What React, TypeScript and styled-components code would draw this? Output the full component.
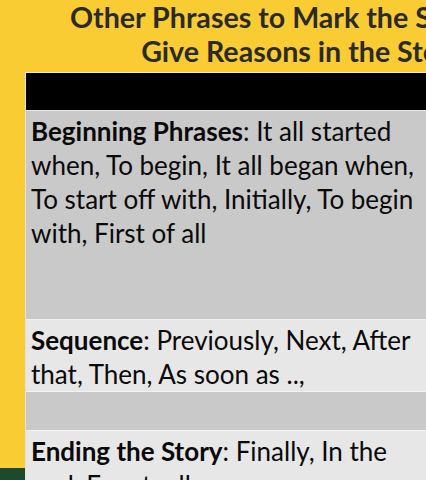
import React from "react"
import styled, { createGlobalStyle } from "styled-components"

const GlobalStyle = createGlobalStyle`
  html,
  body {
    margin: 0;
    padding: 0;
    background: #f9cc33;
    overflow: hidden;
  }
`

const Slide = styled.div`
  position: relative;
  width: 426px;
  height: 480px;
  overflow: hidden;
  background: #f9cc33;
`

const Title = styled.h1`
  width: 606px;
  margin: 0;
  padding-top: 0;
  font-family: "Lato", "Liberation Sans", sans-serif;
  font-weight: 700;
  font-size: 28.6px;
  line-height: 34px;
  color: #2b2a26;
  text-align: center;
  white-space: nowrap;
`

const Table = styled.div`
  position: relative;
  z-index: 1;
  width: 470px;
  margin: 4px 0 0 25px;
  border-top: 1px solid #f3e9c4;
  border-left: 1px solid #e2e2e2;
  font-family: "Lato", "Liberation Sans", sans-serif;
  font-size: 26px;
  line-height: 34px;
  color: #0a0a0a;
`

const HeaderRow = styled.div`
  height: 37px;
  background: #000;
  border-bottom: 1px solid #e6e6e6;
`

const Row = styled.div<{ $shade: "dark" | "light"; $height: number }>`
  box-sizing: border-box;
  height: ${(p) => p.$height}px;
  padding: 3px 6px 0 5px;
  background: ${(p) => (p.$shade === "dark" ? "#c9c9c9" : "#e7e7e7")};
  border-bottom: 1px solid #f2f2f2;
  white-space: nowrap;
`

const Term = styled.b`
  font-weight: 700;
`

const FooterBand = styled.div`
  position: absolute;
  left: 0;
  right: 0;
  bottom: 0;
  height: 12px;
  background: #1d4a2c;
`

export default function App() {
  return (
    <Slide>
      <GlobalStyle />
      <Title>
        Other Phrases to Mark the Story and
        <br />
        Give Reasons in the Story
      </Title>
      <Table>
        <HeaderRow />
        <Row $shade="dark" $height={209}>
          <Term>Beginning Phrases</Term>: It all started
          <br />
          when, To begin, It all began when,
          <br />
          To start off with, Initially, To begin
          <br />
          with, First of all
        </Row>
        <Row $shade="light" $height={72}>
          <Term>Sequence</Term>: Previously, Next, After
          <br />
          that, Then, As soon as ..,
        </Row>
        <Row $shade="dark" $height={39} />
        <Row $shade="light" $height={80}>
          <Term>Ending the Story</Term>: Finally, In the
          <br />
          end, Eventually
        </Row>
      </Table>
      <FooterBand />
    </Slide>
  )
}
